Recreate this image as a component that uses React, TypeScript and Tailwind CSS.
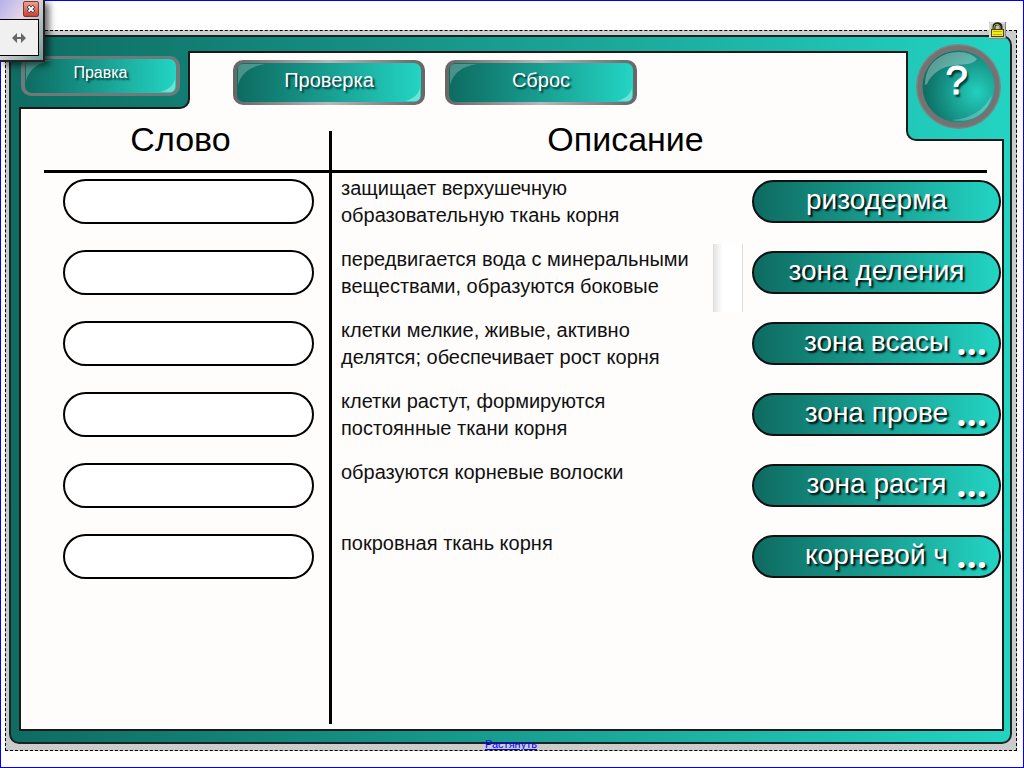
import React from 'react';

interface MatchRow {
  description: string;
  scrollable?: boolean;
}

interface WordItem {
  label: string;
  truncated?: boolean;
}

const rows: MatchRow[] = [
  { description: 'защищает верхушечную образовательную ткань корня' },
  { description: 'передвигается вода с минеральными веществами, образуются боковые', scrollable: true },
  { description: 'клетки мелкие, живые, активно делятся; обеспечивает рост корня' },
  { description: 'клетки растут, формируются постоянные ткани корня' },
  { description: 'образуются корневые волоски' },
  { description: 'покровная ткань корня' },
];

const words: WordItem[] = [
  { label: 'ризодерма' },
  { label: 'зона деления' },
  { label: 'зона всасы', truncated: true },
  { label: 'зона прове', truncated: true },
  { label: 'зона растя', truncated: true },
  { label: 'корневой ч', truncated: true },
];

// Button with a metallic rim and glossy corners
const GlossyButton: React.FC<{ label: string; small?: boolean }> = ({ label, small }) => (
  <button
    type="button"
    className={`rounded-[10px] px-1 py-[3px] ${
      small
        ? 'h-10 w-[159px] bg-[#6f7a78]'
        : 'h-[45px] w-[192px] bg-linear-to-r from-[#666] via-[#b8b8b8] to-[#666]'
    }`}
  >
    <span className="relative flex h-full items-center justify-center overflow-hidden rounded-[7px] bg-linear-to-r from-[#0e6b61] to-[#23d5c4]">
      <svg className="absolute top-0 left-0 h-6 w-8" viewBox="0 0 32 24" aria-hidden="true">
        <path d="M1 22V6Q1 1 6 1H28C14 3 4 10 1 22Z" fill="#fff" fillOpacity="0.25" />
      </svg>
      <svg className="absolute right-0 bottom-0 h-4 w-5" viewBox="0 0 20 16" aria-hidden="true">
        <path d="M19 2V10Q19 15 14 15H4C12 13 17 9 19 2Z" fill="#fff" fillOpacity="0.35" />
      </svg>
      <span
        className={`relative text-white [text-shadow:2px_2px_2px_#033] ${
          small ? 'pb-1.5 text-base leading-5' : 'pb-1.5 text-xl leading-6'
        }`}
      >
        {label}
      </span>
    </span>
  </button>
);

const HelpButton: React.FC = () => (
  <button type="button" aria-label="Справка" className="relative h-[85px] w-[85px] rounded-full">
    <svg className="absolute inset-0" width="85" height="85" viewBox="0 0 85 85" aria-hidden="true">
      <defs>
        <radialGradient id="helpFill" cx="0.75" cy="0.58" r="0.7">
          <stop offset="0" stopColor="#23d0bf" />
          <stop offset="1" stopColor="#0e7166" />
        </radialGradient>
      </defs>
      <circle cx="42.5" cy="42.5" r="42.5" fill="#7d8482" />
      <circle cx="42.5" cy="42.5" r="38" fill="none" stroke="#737373" strokeWidth="6" />
      <circle cx="42.5" cy="42.5" r="36" fill="url(#helpFill)" />
      <path d="M9 41C9 20 24 8 43 8C51 8 57 11 61 15C57 21 48 20 39 21C25 23 16 29 11 40Z" fill="#fff" fillOpacity="0.32" />
      <path d="M76 51C72 70 55 80 36 76C55 75 68 66 76 51Z" fill="#fff" fillOpacity="0.25" />
    </svg>
    <span className="absolute inset-x-0 top-4 pr-1 text-[40px] leading-10 text-white [-webkit-text-stroke:1px_#fff] [text-shadow:2px_3px_2px_#033]">
      ?
    </span>
  </button>
);

const WordButton: React.FC<{ word: WordItem }> = ({ word }) => (
  <button
    type="button"
    className="relative flex h-[43px] w-full items-center justify-center rounded-full border-2 border-[#111] bg-linear-to-r from-[#0e6b61] to-[#23d5c4] pb-1 text-[28px] leading-8 text-white [text-shadow:2px_2px_2px_#000]"
  >
    {word.label}
    {word.truncated && (
      <span className="absolute right-3 bottom-[3px] font-['Open_Sans',sans-serif] text-4xl leading-9 font-bold">...</span>
    )}
  </button>
);

// Small tool window docked in the corner of the screen
const ToolWindow: React.FC = () => (
  <div className="absolute -top-px -left-px z-20 flex h-[62px] w-[45px] flex-col border-r-2 border-b-2 border-[#222] bg-linear-to-br from-[#b5b0ea] via-[#e6d8e4] via-40% to-[#6f9a95] pr-1 pb-1 shadow-[4px_3px_7px_rgba(0,0,0,0.6)]">
    <div className="flex h-[19px] justify-end">
      <button
        type="button"
        aria-label="Закрыть"
        className="mt-px flex h-4 w-4 items-center justify-center rounded-xs border border-[#7c3a30] bg-linear-to-b from-[#eea08c] to-[#c9422a]"
      >
        <svg width="8" height="8" viewBox="0 0 8 8" aria-hidden="true">
          <path d="M1 1L7 7M7 1L1 7" stroke="#333a55" strokeWidth="3.4" />
          <path d="M1.5 1.5L6.5 6.5M6.5 1.5L1.5 6.5" stroke="#fff" strokeWidth="1.8" />
        </svg>
      </button>
    </div>
    <button
      type="button"
      aria-label="Растянуть по ширине"
      className="flex flex-1 items-center justify-center border border-l-0 border-black bg-[#f0f0f0]"
    >
      <svg width="14" height="10" viewBox="0 0 14 10" aria-hidden="true">
        <path d="M0 5L5 0V4H9V0L14 5L9 10V6H5V10Z" fill="#666" />
      </svg>
    </button>
  </div>
);

const LockBadge: React.FC = () => (
  <svg className="absolute -top-[9px] right-2.5 z-10" width="17" height="17" viewBox="0 0 17 17" aria-hidden="true">
    <rect width="17" height="17" fill="#858585" />
    <path d="M0 0H16V16H0Z" fill="#c4c4c4" />
    <path d="M1 16V1H16" fill="none" stroke="#f0f0f0" />
    <path d="M5 8V5C5 0.5 12 0.5 12 5V8" fill="none" stroke="#222" strokeWidth="3" />
    <path d="M5 8V5C5 1.5 11 1.5 11 5V8" fill="none" stroke="#b8b03a" />
    <rect x="2.5" y="7.5" width="12" height="7" fill="#f0ea20" stroke="#4c4800" />
    <path d="M4 9.500H13M4 12.500H13" stroke="#b5ae00" />
  </svg>
);

const App: React.FC = () => {
  return (
    <main className="relative flex min-h-screen flex-col border border-[#00f] bg-white pt-[29px] pr-1.5 pb-4 pl-1 font-['Liberation_Sans',Arial,sans-serif] text-black">
      <ToolWindow />

      <div className="relative flex flex-1 flex-col border border-dashed border-black bg-[#ccc] pt-1 pr-1 pb-1.5 pl-[3px]">
        <LockBadge />

        {/* Teal frame; the fixed gradient is shared with the corner tabs */}
        <div className="flex flex-1 flex-col rounded-[10px] border-2 border-[#1a2523] bg-linear-to-r from-[#0e6b61] to-[#23d5c4] bg-fixed pt-3.5 pr-1.5 pb-[11px] pl-2">
          <div className="flex-1 border-2 border-[#1a1a1a] bg-[#fffdfc]">
            {/* Toolbar */}
            <header className="flex h-14 items-start">
              <div className="-mt-0.5 -ml-0.5 h-[58px] w-[171px] rounded-br-[10px] border-r-2 border-b-2 border-[#1a1a1a] bg-linear-to-r from-[#0e6b61] to-[#23d5c4] bg-fixed pt-[5px] pl-0.5">
                <GlossyButton label="Правка" small />
              </div>
              <div className="ml-[43px] flex flex-1 gap-5 pt-[7px]">
                <GlossyButton label="Проверка" />
                <GlossyButton label="Сброс" />
              </div>
              <div className="-mt-0.5 -mr-0.5 h-[90px] w-[98px] rounded-bl-[10px] border-b-2 border-l-2 border-[#1a1a1a] bg-linear-to-r from-[#0e6b61] to-[#23d5c4] bg-fixed pl-2">
                <div className="-mt-[7px]">
                  <HelpButton />
                </div>
              </div>
            </header>

            {/* Matching area */}
            <section className="mt-[22px] mr-px ml-[23px] flex items-start">
              <table className="mr-3.5 flex-1 table-fixed border-separate border-spacing-0">
                <thead>
                  <tr className="h-[42px] text-[34px] leading-4">
                    <th scope="col" className="w-[288px] border-r-3 border-b-3 border-black p-0 pr-3 align-top font-normal">
                      Слово
                    </th>
                    <th scope="col" className="border-b-3 border-black p-0 pr-[68px] align-top font-normal">
                      Описание
                    </th>
                  </tr>
                </thead>
                <tbody>
                  {rows.map((row, index) => (
                    <tr key={row.description} className="h-[71px]">
                      <td className="border-r-3 border-black p-0 pt-1.5 pl-[19px] align-top">
                        <button
                          type="button"
                          aria-label={`Ячейка ${index + 1}`}
                          className="block h-[45px] w-[251px] rounded-full border-2 border-black bg-white"
                        />
                      </td>
                      <td className="p-0 pl-[9px] align-top">
                        <div className="flex h-[71px]">
                          <p className="w-[352px] pt-0.5 text-[20px] leading-[27px] text-[#111]">{row.description}</p>
                          {row.scrollable && (
                            <div className="ml-5 h-[68px] w-[30px] border-x border-x-[#ddd] bg-linear-to-r from-[#e4e4e4] to-white to-30%" />
                          )}
                        </div>
                      </td>
                    </tr>
                  ))}
                  <tr className="h-[125px]">
                    <td className="border-r-3 border-black p-0" />
                    <td className="p-0" />
                  </tr>
                </tbody>
              </table>

              {/* Word bank */}
              <ul className="-ml-[249px] w-[249px] pt-[49px]">
                {words.map(word => (
                  <li key={word.label} className="h-[71px]">
                    <WordButton word={word} />
                  </li>
                ))}
              </ul>
            </section>
          </div>
        </div>

        <a href="#stretch" className="absolute inset-x-0 bottom-0 mx-auto w-fit text-[11px] leading-3 text-[#00f] underline">
          Растянуть
        </a>
      </div>
    </main>
  );
};

export default App;
